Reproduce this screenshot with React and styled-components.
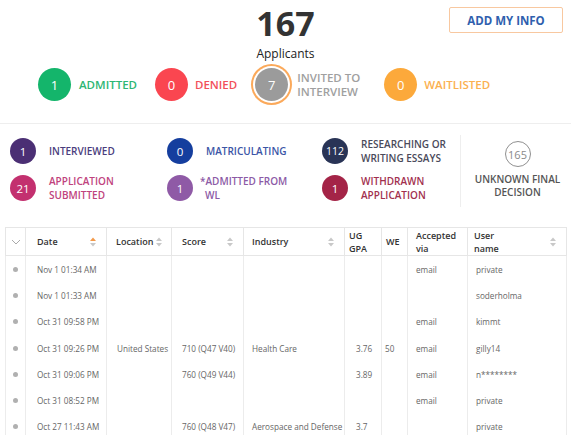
import React from 'react';
import styled, { createGlobalStyle, css } from 'styled-components';

const GlobalStyle = createGlobalStyle`
  body {
    margin: 0;
    background: #ffffff;
    font-family: "Open Sans", "DejaVu Sans", sans-serif;
  }
`

const Page = styled.div`
  width: 571px;
  height: 435px;
  overflow: hidden;
`

const Summary = styled.section`
  height: 124px;
  box-sizing: border-box;
  border-bottom: 1px solid #eeeeee;
`

const TopBar = styled.div`
  display: grid;
  grid-template-columns: 1fr auto 1fr;
  align-items: start;
`

const Total = styled.div`
  grid-column: 2;
  text-align: center;
`

const TotalNumber = styled.div`
  font-size: 34px;
  font-weight: 700;
  line-height: 46px;
  color: #333333;
`

const TotalLabel = styled.div`
  font-size: 12px;
  font-weight: 500;
  line-height: 16px;
  color: #222222;
`

const AddButton = styled.button`
  justify-self: end;
  margin: 7px 8px 0 0;
  width: 114px;
  height: 26px;
  padding: 0;
  border: 1px solid #f8c8a0;
  border-radius: 2px;
  background: #ffffff;
  color: #2f5fae;
  font-family: inherit;
  font-size: 11.5px;
  font-weight: 700;
  cursor: pointer;
`

const StatusRow = styled.div`
  display: flex;
  align-items: center;
  gap: 18px;
  padding-left: 38px;
  margin-top: 6px;
`

const Status = styled.div`
  display: flex;
  align-items: center;
  gap: ${(p) => p.$gap || 8}px;
`

const Badge = styled.span`
  width: ${(p) => p.$size}px;
  height: ${(p) => p.$size}px;
  flex-shrink: 0;
  border-radius: 50%;
  background: ${(p) => p.$bg};
  color: #ffffff;
  display: flex;
  align-items: center;
  justify-content: center;
  font-size: ${(p) => p.$fs}px;
  ${(p) => p.$ring && css`
    box-shadow: 0 0 0 2px #ffffff, 0 0 0 4px #fba95a;
  `}
`

const OutlineBadge = styled.span`
  width: 26px;
  height: 26px;
  box-sizing: border-box;
  border: 1.5px solid #909090;
  border-radius: 50%;
  display: flex;
  align-items: center;
  justify-content: center;
  color: #8a8a8a;
  font-size: 11px;
`

const StatusLabel = styled.span`
  color: ${(p) => p.$color};
  font-size: 11.5px;
  font-weight: 600;
  line-height: 14px;
  width: ${(p) => (p.$width ? `${p.$width}px` : 'auto')};
`

const Breakdown = styled.section`
  display: flex;
  height: 103px;
`

const BreakdownGrid = styled.div`
  width: 460px;
  box-sizing: border-box;
  padding: 14px 0 0 10px;
  display: grid;
  grid-template-columns: 157px 155px 1fr;
  row-gap: 11px;
  align-content: start;
`

const BreakdownItem = styled.div`
  display: flex;
  align-items: center;
  gap: 13px;
  height: 26px;
`

const BreakdownLabel = styled.span`
  color: ${(p) => p.$color};
  font-size: 10px;
  font-weight: 600;
  line-height: 14px;
  ${(p) => p.$hang && css`
    padding-left: 5px;
    text-indent: -5px;
    margin-left: -6px;
  `}
`

const Unknown = styled.div`
  align-self: start;
  margin-top: 11px;
  height: 72px;
  width: 101px;
  box-sizing: border-box;
  padding: 6px 0 0 13px;
  border-left: 1px solid #eeeeee;
  display: flex;
  flex-direction: column;
  align-items: center;
`

const UnknownLabel = styled.div`
  margin-top: 6px;
  color: #555555;
  font-size: 10px;
  font-weight: 600;
  line-height: 13px;
  text-align: center;
  white-space: nowrap;
`

const Table = styled.table`
  margin-left: 5px;
  width: 561px;
  border-collapse: collapse;
  table-layout: fixed;
`

const HeadCell = styled.th`
  height: 27px;
  padding: 0;
  border: 1px solid #e6e6e6;
  text-align: left;
  vertical-align: middle;
  color: #333333;
  font-size: 9px;
  font-weight: 600;
  line-height: 13px;
`

const HeadInner = styled.div`
  display: flex;
  align-items: center;
  justify-content: ${(p) => (p.$center ? 'center' : 'space-between')};
  gap: 3px;
  padding-left: ${(p) => p.$pad}px;
  padding-right: ${(p) => (p.$center ? 0 : 10)}px;
`

const Cell = styled.td`
  height: 26.3px;
  padding: 0 0 0 ${(p) => p.$pad}px;
  border-left: 1px solid #ececec;
  border-right: 1px solid #ececec;
  color: #666666;
  font-size: 8.2px;
  white-space: nowrap;
  overflow: hidden;
  vertical-align: middle;
`

const Dot = styled.span`
  display: block;
  margin: 0 auto;
  width: 5px;
  height: 5px;
  border-radius: 50%;
  background: #b0b0b0;
`

const SortIcon = ({ active }) => (
  <svg width="6" height="10" viewBox="0 0 6 10" style={{ flexShrink: 0 }}>
    <path d="M3 0.5 L6 4 L0 4 Z" fill={active ? '#f39a4b' : '#c8c8c8'} />
    <path d="M0 6 L6 6 L3 9.5 Z" fill="#c8c8c8" />
  </svg>
)

const Chevron = () => (
  <svg width="10" height="6" viewBox="0 0 10 6">
    <polyline points="1,1 5,5 9,1" fill="none" stroke="#aaaaaa" strokeWidth="1" />
  </svg>
)

const statuses = [
  { n: 1, label: 'ADMITTED', bg: '#14b56b', color: '#2db674' },
  { n: 0, label: 'DENIED', bg: '#fa4650', color: '#f2505a', gap: 7 },
  { n: 7, label: <>INVITED TO<br />INTERVIEW</>, bg: '#9b9b9b', color: '#a0a0a0', ring: true, width: 69, gap: 9 },
  { n: 0, label: 'WAITLISTED', bg: '#fca93b', color: '#fbb050', gap: 7 },
]

const breakdown = [
  { n: 1, label: 'INTERVIEWED', bg: '#4b2f74', color: '#4a3d7d' },
  { n: 0, label: 'MATRICULATING', bg: '#153e9e', color: '#3b55a6' },
  { n: 112, label: <>RESEARCHING OR<br />WRITING ESSAYS</>, bg: '#293456', color: '#4a4a5a' },
  { n: 21, label: <>APPLICATION<br />SUBMITTED</>, bg: '#c3306f', color: '#c0427d' },
  { n: 1, label: <>*ADMITTED FROM<br />WL</>, bg: '#8f5aa6', color: '#8c5aa6', hang: true },
  { n: 1, label: <>WITHDRAWN<br />APPLICATION</>, bg: '#a42447', color: '#a2304e' },
]

const columns = [
  { key: 'dot', width: 20 },
  { key: 'date', label: 'Date', width: 81, head: 11, pad: 11, sort: 'active' },
  { key: 'location', label: 'Location', width: 65, head: 9, pad: 10, sort: 'on' },
  { key: 'score', label: 'Score', width: 72, head: 10, pad: 10, sort: 'on' },
  { key: 'industry', label: 'Industry', width: 101, head: 8, pad: 8, sort: 'on' },
  { key: 'gpa', label: <>UG<br />GPA</>, width: 37, head: 4, pad: 11 },
  { key: 'we', label: 'WE', width: 26, head: 4, pad: 3 },
  { key: 'via', label: <>Accepted<br />via</>, width: 60, head: 8, pad: 8 },
  { key: 'user', label: <>User<br />name</>, width: 99, head: 6, pad: 8, sort: 'on' },
]

const rows = [
  { date: 'Nov 1 01:34 AM', via: 'email', user: 'private' },
  { date: 'Nov 1 01:33 AM', user: 'soderholma' },
  { date: 'Oct 31 09:58 PM', via: 'email', user: 'kimmt' },
  { date: 'Oct 31 09:26 PM', location: 'United States', score: '710 (Q47 V40)', industry: 'Health Care', gpa: '3.76', we: '50', via: 'email', user: 'gilly14' },
  { date: 'Oct 31 09:06 PM', score: '760 (Q49 V44)', gpa: '3.89', via: 'email', user: 'n********' },
  { date: 'Oct 31 08:52 PM', via: 'email', user: 'private' },
  { date: 'Oct 27 11:43 AM', score: '760 (Q48 V47)', industry: 'Aerospace and Defense', gpa: '3.7', user: 'private' },
]

const App = () => {
  return (
    <Page>
      <GlobalStyle />
      <Summary>
        <TopBar>
          <Total>
            <TotalNumber>167</TotalNumber>
            <TotalLabel>Applicants</TotalLabel>
          </Total>
          <AddButton>ADD MY INFO</AddButton>
        </TopBar>
        <StatusRow>
          {statuses.map((s, i) => (
            <Status key={i} $gap={s.gap}>
              <Badge $size={33} $fs={13} $bg={s.bg} $ring={s.ring}>{s.n}</Badge>
              <StatusLabel $color={s.color} $width={s.width}>{s.label}</StatusLabel>
            </Status>
          ))}
        </StatusRow>
      </Summary>

      <Breakdown>
        <BreakdownGrid>
          {breakdown.map((b, i) => (
            <BreakdownItem key={i}>
              <Badge $size={26} $fs={b.n > 99 ? 10.5 : 11.5} $bg={b.bg}>{b.n}</Badge>
              <BreakdownLabel $color={b.color} $hang={b.hang}>{b.label}</BreakdownLabel>
            </BreakdownItem>
          ))}
        </BreakdownGrid>
        <Unknown>
          <OutlineBadge>165</OutlineBadge>
          <UnknownLabel>UNKNOWN FINAL<br />DECISION</UnknownLabel>
        </Unknown>
      </Breakdown>

      <Table>
        <colgroup>
          {columns.map((c) => (
            <col key={c.key} style={{ width: c.width }} />
          ))}
        </colgroup>
        <thead>
          <tr>
            {columns.map((c) => (
              <HeadCell key={c.key}>
                {c.key === 'dot' ? (
                  <HeadInner $pad={0} $center>
                    <Chevron />
                  </HeadInner>
                ) : (
                  <HeadInner $pad={c.head}>
                    <span>{c.label}</span>
                    {c.sort && <SortIcon active={c.sort === 'active'} />}
                  </HeadInner>
                )}
              </HeadCell>
            ))}
          </tr>
        </thead>
        <tbody>
          {rows.map((r, i) => (
            <tr key={i}>
              {columns.map((c) =>
                c.key === 'dot' ? (
                  <Cell key={c.key} $pad={0}><Dot /></Cell>
                ) : (
                  <Cell key={c.key} $pad={c.pad}>{r[c.key] || ''}</Cell>
                )
              )}
            </tr>
          ))}
        </tbody>
      </Table>
    </Page>
  );
};

export default App;
